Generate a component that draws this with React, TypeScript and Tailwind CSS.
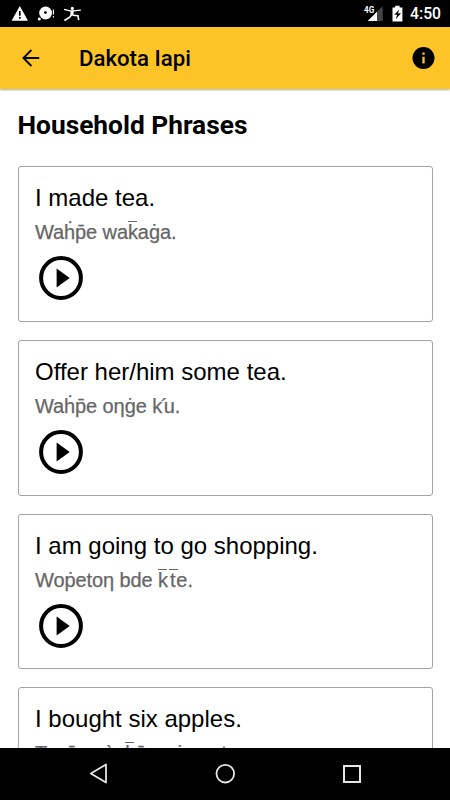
const phrases = [
  { english: 'I made tea.', dakota: 'Waḣp̄e wak̄aġa.' },
  { english: 'Offer her/him some tea.', dakota: 'Waḣp̄e oƞġe k´u.' },
  { english: 'I am going to go shopping.', dakota: 'Woṗetoƞ bde k̄t̄e.' },
  { english: 'I bought six apples.', dakota: 'Tasp̄aƞ s̀ak̄p̄e oṗewatoƞ.' },
]

function StatusBar() {
  return (
    <div className="flex h-[27px] shrink-0 items-center bg-black text-white">
      <svg className="ml-[11px] h-[17px] w-[18px]" viewBox="0 0 18 17">
        <path d="M8.8 1 17 15.8H.6Z" fill="#fff" />
        <path d="M8.8 6v4.7M8.8 12v1.8" stroke="#000" strokeWidth="1.7" />
      </svg>
      <svg className="ml-[8px] h-[17px] w-[18px]" viewBox="0 0 18 17">
        <circle cx="8.6" cy="8" r="6.4" fill="#fff" />
        <circle cx="8.4" cy="7.6" r="1.4" fill="#000" />
        <path d="M3.4 12.6 5 15.5" stroke="#000" fill="none" />
        <circle cx="2.3" cy="14" r="1.5" fill="#fff" />
        <path d="M16.4 4.5v5M16.4 11v1.5" stroke="#fff" strokeWidth="1.1" />
      </svg>
      <svg className="ml-[8px] h-[17px] w-[20px]" viewBox="0 0 20 17" fill="none" stroke="#fff">
        <circle cx="9.3" cy="3.4" r="1.6" fill="#fff" stroke="none" />
        <path d="M1 4.3 8 6.2 17.8 5.2" strokeWidth="1.3" />
        <path d="M7.6 5.6h3.2l-.4 5H7.4Z" fill="#fff" stroke="none" />
        <path d="M8.4 9.8 6.8 12.2 1.4 15.5M9.6 10.2l5.4.6.7 4.4" strokeWidth="1.6" />
      </svg>
      <div className="ml-auto flex items-center">
        <span className="mb-[7px] w-[10px] origin-left scale-x-90 font-['Roboto',sans-serif] text-[9px] leading-none font-bold">
          4G
        </span>
        <svg className="-ml-[7px] h-[17px] w-[16px]" viewBox="0 0 16 17">
          <path d="M15.7 1v15H.7Z" fill="#444" />
          <path d="M10 6.7V16H.7Z" fill="#fff" />
        </svg>
        <svg className="ml-[9px] h-[17px] w-[11px]" viewBox="0 0 11 17">
          <path d="M3.2.7h4.4v1.7h2.8v14H.5v-14h2.7Z" fill="#fff" />
          <path d="M7.3 4.4 2.2 9.8h2.9l-1.3 4.4 5.2-6H5.9Z" fill="#000" />
        </svg>
        <span className="mr-[9px] ml-[7px] pt-px font-['Roboto',sans-serif] text-[15.7px] leading-none font-medium">
          4:50
        </span>
      </div>
    </div>
  )
}

function AppBar() {
  return (
    <header className="z-10 flex h-[62px] shrink-0 items-center bg-[#fcc426] shadow-[0_1px_2px_rgba(0,0,0,0.35)]">
      <svg className="ml-[22px] h-[18px] w-[18px]" viewBox="0 0 18 18" fill="none" stroke="#000" strokeWidth="1.8">
        <path d="M17.3 9H1.5M9.4 1 1.4 9l8 8" />
      </svg>
      <h1 className="ml-[39px] pt-px font-['Roboto',sans-serif] text-[22.2px] leading-none font-medium">
        Dakota Iapi
      </h1>
      <svg className="mr-[15px] ml-auto h-[23px] w-[23px]" viewBox="0 0 23 23">
        <circle cx="11.5" cy="11" r="11" fill="#000" />
        <path d="M11.5 5.5v2.3M11.5 9.8v6.6" stroke="#fcc426" strokeWidth="2.3" />
      </svg>
    </header>
  )
}

// Tall letters get a drawn macron, the font's own mark runs into their stems
function DakotaText({ text }: { text: string }) {
  const parts = text.split(/([kt]\u0304|´)/)
  return (
    <p className="mt-[7px] text-[20px] leading-[26px] tracking-[-0.1px] whitespace-nowrap text-[#666] [-webkit-text-stroke:0.25px_#666]">
      {parts.map((part, i) => {
        if (part === '´') {
          return (
            <span key={i} className="-ml-px tracking-[-4px]">
              {part}
            </span>
          )
        }
        if (part.endsWith('\u0304')) {
          return (
            <span key={i} className={part[0] === 't' ? 'relative mr-px ml-[2px]' : 'relative'}>
              {part[0]}
              <span
                className={
                  part[0] === 't'
                    ? 'absolute top-0 -left-px w-[9px] border-t-[1.5px] border-[#666]'
                    : 'absolute top-0 left-0 w-[9px] border-t-[1.5px] border-[#666]'
                }
              />
            </span>
          )
        }
        return part
      })}
    </p>
  )
}

function PlayButton() {
  return (
    <button className="mt-[11px] ml-[3.5px] block" aria-label="Play">
      <svg className="block h-[44px] w-[44px]" viewBox="0 0 44 44">
        <circle cx="22" cy="22" r="19.9" fill="none" stroke="#000" strokeWidth="4" />
        <path d="M17.6 12.5v19L30.7 22Z" fill="#000" />
      </svg>
    </button>
  )
}

function NavBar() {
  return (
    <nav className="flex h-[52px] shrink-0 items-center bg-black">
      <svg className="ml-[89px] h-[22px] w-[19px]" viewBox="0 0 19 22" fill="none" stroke="#e6e6e6" strokeWidth="1.8">
        <path d="M17 1.5v18L1.8 10.5Z" strokeLinejoin="round" />
      </svg>
      <svg className="ml-[107px] h-[20px] w-[20px]" viewBox="0 0 20 20" fill="none" stroke="#e6e6e6" strokeWidth="1.8">
        <circle cx="10.3" cy="9.7" r="8.8" />
      </svg>
      <svg className="ml-[108px] h-[18px] w-[18px]" viewBox="0 0 18 18" fill="none" stroke="#e6e6e6" strokeWidth="2">
        <rect x="1" y="1" width="16" height="16" />
      </svg>
    </nav>
  )
}

export default function App() {
  return (
    <div className="flex h-[800px] w-[450px] flex-col overflow-hidden bg-white text-black">
      <StatusBar />
      <AppBar />
      <main className="min-h-0 flex-1 overflow-hidden px-[17.5px] pt-[21px]">
        <h2 className="h-[56px] font-['Roboto',sans-serif] text-[26.3px] leading-[30px] font-bold">
          Household Phrases
        </h2>
        <div className="flex flex-col gap-[18px]">
          {phrases.map((phrase) => (
            <article
              key={phrase.english}
              className="h-[155.8px] shrink-0 rounded-[3px] border border-[#a3a3a3] px-[16.5px] pt-[17px] font-['Liberation_Sans',Arial,sans-serif]"
            >
              <p className="text-[24px] leading-[28px] whitespace-nowrap">{phrase.english}</p>
              <DakotaText text={phrase.dakota} />
              <PlayButton />
            </article>
          ))}
        </div>
      </main>
      <NavBar />
    </div>
  )
}
